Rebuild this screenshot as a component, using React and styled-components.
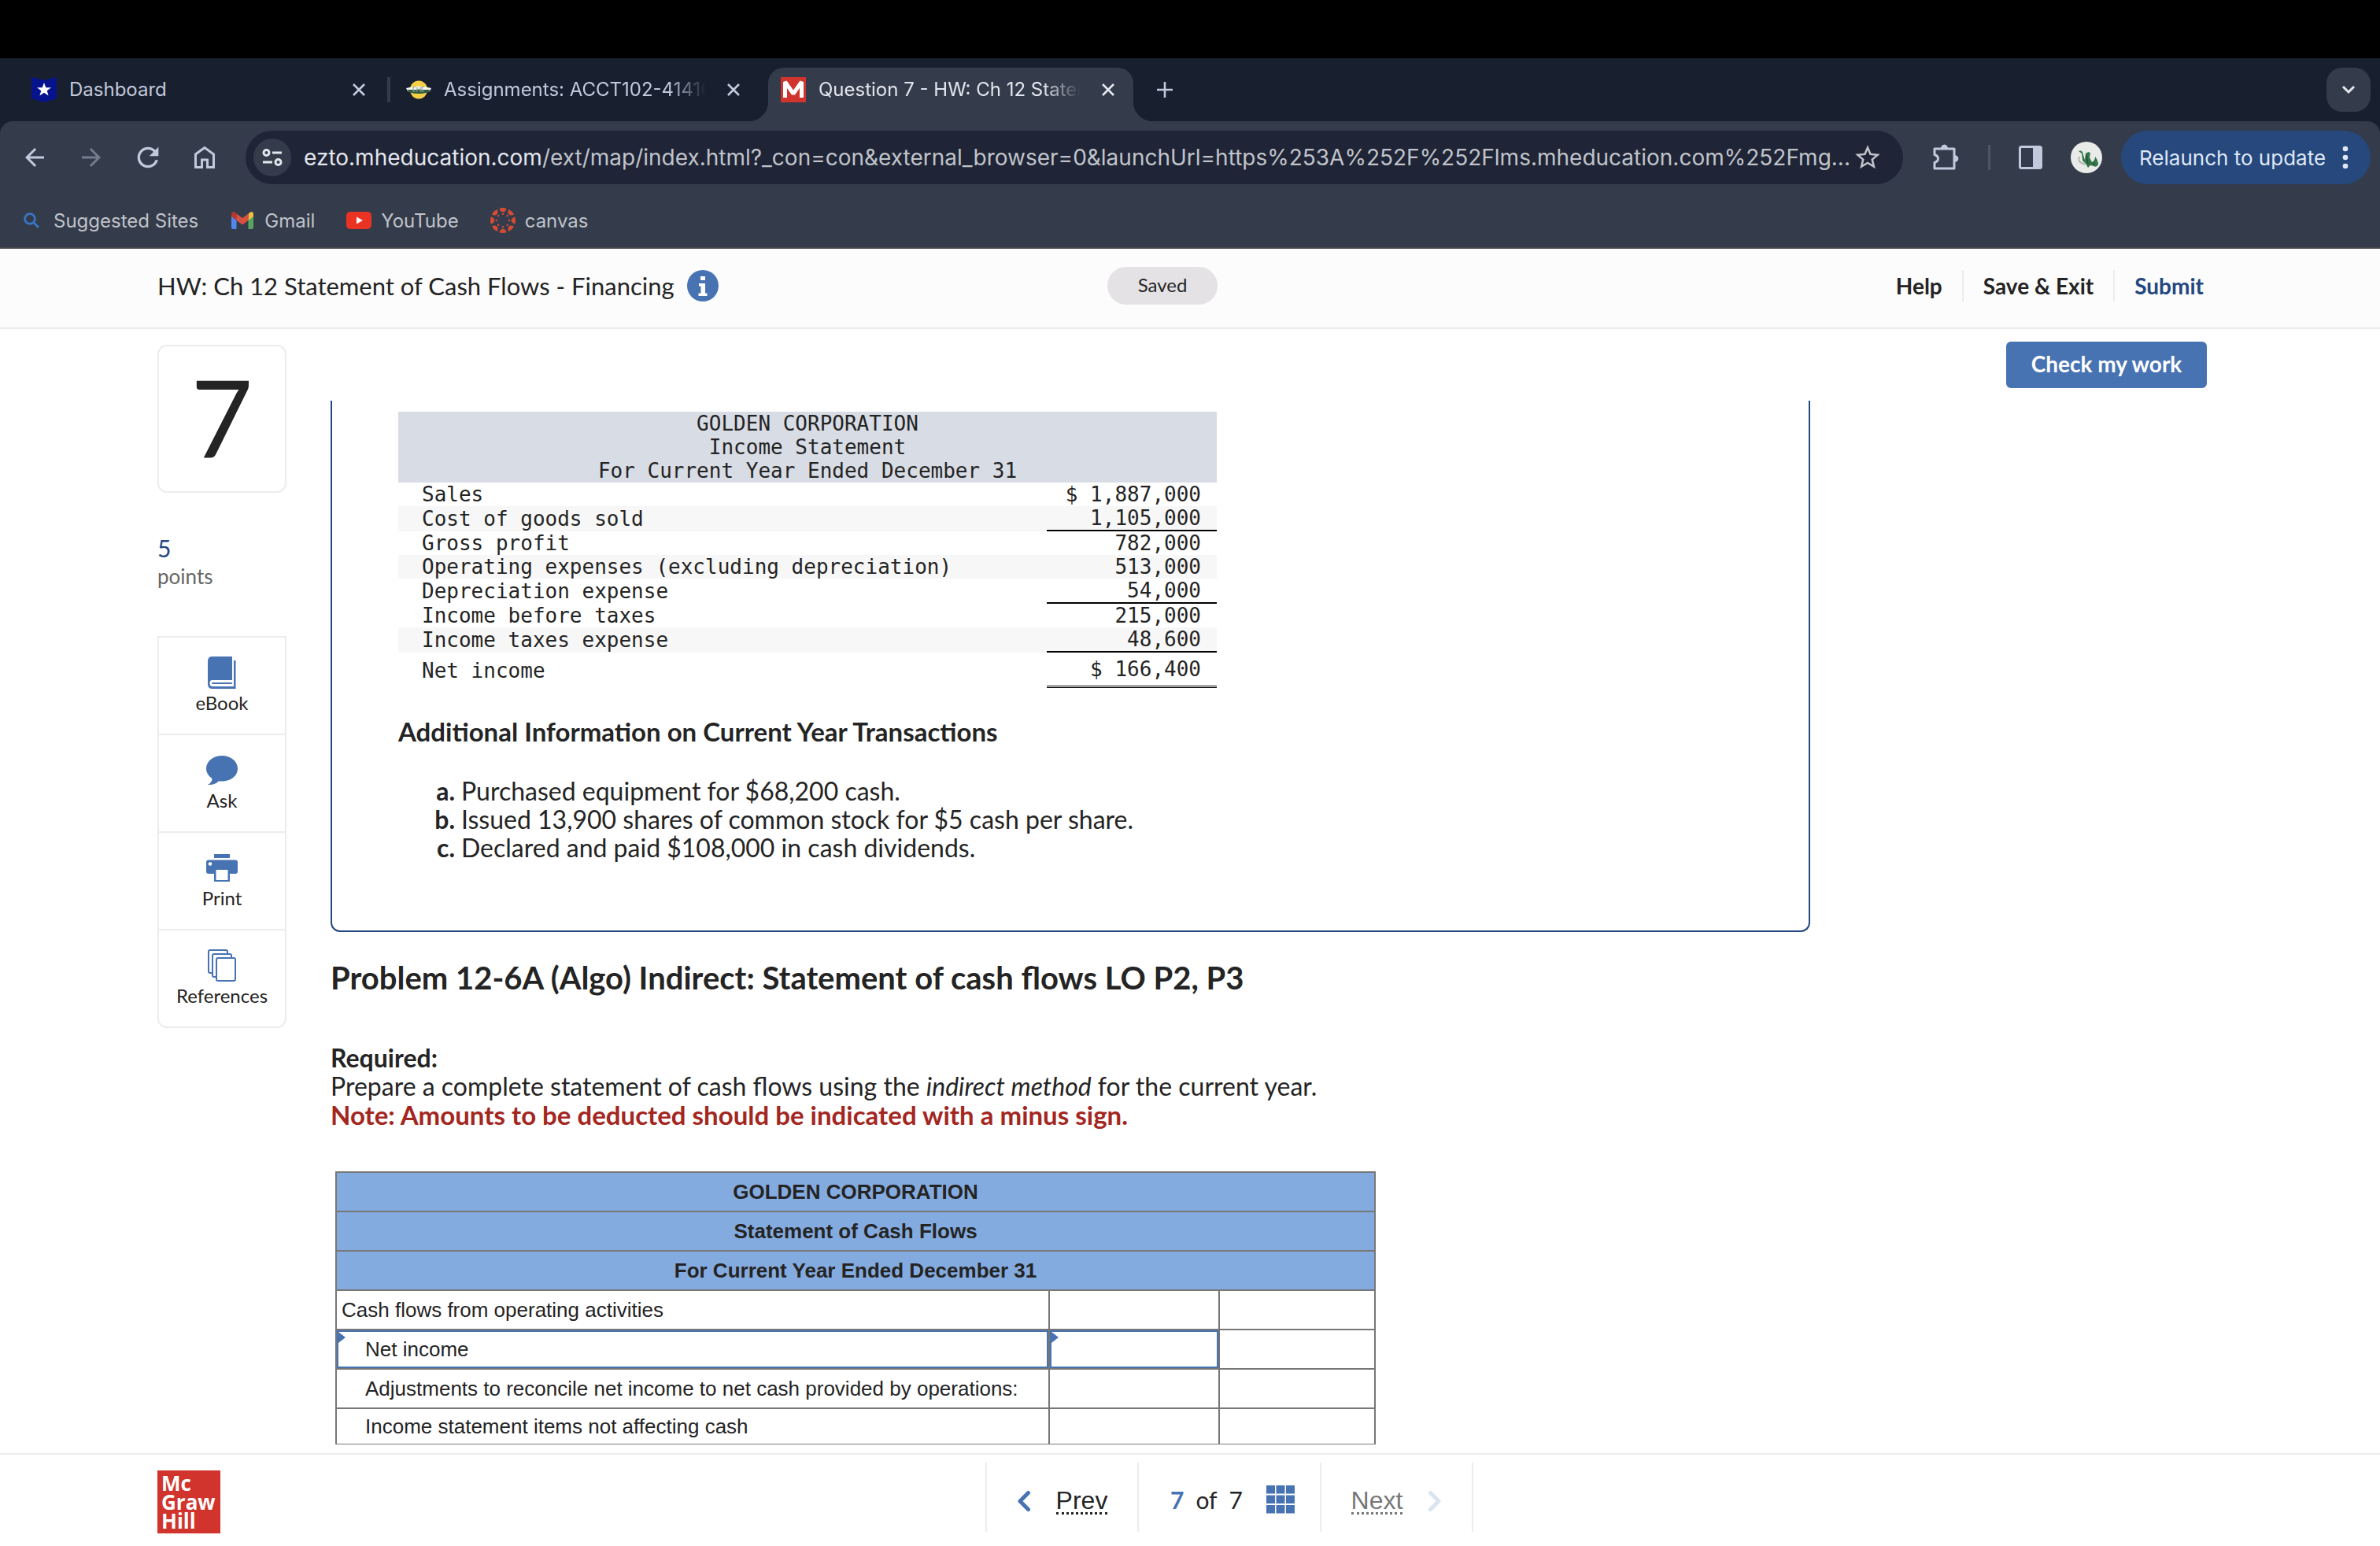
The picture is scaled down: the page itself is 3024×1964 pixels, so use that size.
import React from 'react'
import styled, { createGlobalStyle } from 'styled-components'
import { MdArrowBack, MdArrowForward, MdRefresh, MdStarBorder } from 'react-icons/md'

const PALETTE = {
  STRIP: '#18202f',
  TOOLBAR: '#343c4b',
  OMNIBOX: '#1f2536',
  CHROME_TEXT: '#c3c9dc',
  BLUE: '#4873b3',
  NAVY: '#23477f',
  TEXT: '#242424',
  LINE: '#ececec',
  RED: '#d0342c',
}

const FONTS = {
  CHROME: "'Inter', sans-serif",
  PAGE: "'Lato', sans-serif",
  ARIAL: "'Liberation Sans', Arial, sans-serif",
  MONO: "'DejaVu Sans Mono', monospace",
}

const TABS = [
  { id: 'dashboard', title: 'Dashboard', divided: true },
  { id: 'assignments', title: 'Assignments: ACCT102-41416' },
  { id: 'question', title: 'Question 7 - HW: Ch 12 Statement', active: true },
]

const BOOKMARKS = [
  { id: 'search', title: 'Suggested Sites' },
  { id: 'gmail', title: 'Gmail' },
  { id: 'youtube', title: 'YouTube' },
  { id: 'canvas', title: 'canvas' },
]

const TOOLS = ['eBook', 'Ask', 'Print', 'References']

const INCOME_ROWS = [
  { label: 'Sales', value: '$ 1,887,000' },
  { label: 'Cost of goods sold', value: '1,105,000', line: true, shaded: true },
  { label: 'Gross profit', value: '782,000' },
  { label: 'Operating expenses (excluding depreciation)', value: '513,000', shaded: true },
  { label: 'Depreciation expense', value: '54,000', line: true },
  { label: 'Income before taxes', value: '215,000' },
  { label: 'Income taxes expense', value: '48,600', line: true, shaded: true },
]

const TRANSACTIONS = [
  { mark: 'a.', text: 'Purchased equipment for $68,200 cash.' },
  { mark: 'b.', text: 'Issued 13,900 shares of common stock for $5 cash per share.' },
  { mark: 'c.', text: 'Declared and paid $108,000 in cash dividends.' },
]

const Favicon = ({ id }) => {
  if (id === 'dashboard') {
    return (
      <svg width="32" height="32" viewBox="0 0 32 32">
        <path d="M0 0 L16 4 L32 0 V27 L16 32 L0 27Z" fill="#07138c" />
        <path d="M16 7 L18.3 13.2 H25 L19.7 17.2 L21.6 23.6 L16 19.8 L10.4 23.6 L12.3 17.2 L7 13.2 H13.7Z" fill="#fff" />
      </svg>
    )
  }
  if (id === 'assignments') {
    return (
      <svg width="32" height="32" viewBox="0 0 32 32">
        <ellipse cx="16" cy="16" rx="11" ry="11.5" fill="#f7cf46" />
        <path d="M0 14 Q16 9 32 14 L30 18 Q16 22 2 18Z" fill="#f4f6f2" />
        <path d="M1 16 H31 L27 19.500 Q16 22.500 5 19.500Z" fill="#2f5a41" />
        <path d="M12 12.500 H9 V18 H12 M14 18.500 V12.500 M18 12.500 V18.500 M14 15.500 H18 M23 12.500 H20 V18 H23" fill="none" stroke="#8fa597" strokeWidth="1.200" />
      </svg>
    )
  }
  return (
    <svg width="32" height="32" viewBox="0 0 32 32">
      <rect width="32" height="32" fill={PALETTE.RED} />
      <path d="M5.500 26 V6 L16 21 L26.500 6 V26" fill="none" stroke="#fff" strokeWidth="5" strokeLinejoin="bevel" />
    </svg>
  )
}

const petals = [0, 45, 90, 135, 180, 225, 270, 315]

const BookmarkIcon = ({ id }) => {
  if (id === 'search') {
    return (
      <svg width="20" height="20" viewBox="0 0 20 20" fill="none" stroke="#3a74c4" strokeWidth="2.800">
        <circle cx="8" cy="8" r="6.400" />
        <path d="M12.500 12.500 L19 19" />
      </svg>
    )
  }
  if (id === 'gmail') {
    return (
      <svg width="28" height="22" viewBox="0 0 28 22">
        <path d="M0 3 V20 Q0 22 2 22 H6.500 V8Z" fill="#5087ec" />
        <path d="M28 3 V20 Q28 22 26 22 H21.500 V8Z" fill="#58a65c" />
        <path d="M0 3 Q0 0 3 0 L6.500 2.500 V11 L0 6Z" fill="#b8362b" />
        <path d="M28 3 Q28 0 25 0 L21.500 2.500 V11 L28 6Z" fill="#f1bd42" />
        <path d="M6.500 2.500 L14 8 L21.500 2.500 V11 L14 16.500 L6.500 11Z" fill="#d95140" />
      </svg>
    )
  }
  if (id === 'youtube') {
    return (
      <svg width="32" height="24" viewBox="0 0 32 24">
        <rect y="1" width="32" height="22" rx="5" fill="#ea3323" />
        <path d="M13 7.500 L21 12 L13 16.500Z" fill="#fff" />
      </svg>
    )
  }
  return (
    <svg width="32" height="32" viewBox="0 0 32 32" fill="#d74b35">
      {petals.map(angle => (
        <g key={angle} transform={`rotate(${angle} 16 16)`}>
          <path d="M11.500 0.700 Q16 -0.700 20.500 0.700 Q19.500 5.200 16 5.200 Q12.500 5.200 11.500 0.700Z" />
          <circle cx="16" cy="7.800" r="1.300" />
        </g>
      ))}
    </svg>
  )
}

const ToolIcon = ({ name }) => {
  if (name === 'eBook') {
    return (
      <svg width="40" height="42" viewBox="0 0 40 42" fill={PALETTE.BLUE}>
        <path d="M7 0 H33 V30 H7 Q4.500 30.500 4.500 34 Q4.500 38 8 38 H35 V5 H37.500 V41 H8 Q2 41 2 35 V6 Q2 0 7 0Z" />
        <rect x="7" y="33" width="26" height="2" rx="1" />
      </svg>
    )
  }
  if (name === 'Ask') {
    return (
      <svg width="40" height="42" viewBox="0 0 40 42" fill={PALETTE.BLUE}>
        <path d="M20 2 C31 2 40 9 40 18.500 C40 28 31 34.500 20 34.500 C18.500 34.500 17 34.400 16 34.200 C13 37.500 8 39.500 2 39 C5.500 37 7.500 34.500 7.500 31 C3 28 0 23.500 0 18.500 C0 9 9 2 20 2Z" />
      </svg>
    )
  }
  if (name === 'Print') {
    return (
      <svg width="40" height="42" viewBox="0 0 40 42" fill={PALETTE.BLUE}>
        <rect x="10" y="3" width="20" height="5" />
        <path fillRule="evenodd" d="M3 10.500 H37 Q40 10.500 40 13.500 V25 Q40 28 37 28 H30 V38 H10 V28 H3 Q0 28 0 25 V13.500 Q0 10.500 3 10.500Z M12.500 23 V36 H27.500 V23Z" />
        <circle cx="5" cy="15.500" r="2.300" fill="#fff" />
      </svg>
    )
  }
  return (
    <svg width="40" height="42" viewBox="0 0 40 42" fill="#fff" stroke={PALETTE.BLUE} strokeWidth="2">
      <rect x="3" y="1" width="24" height="29" rx="2" />
      <rect x="8" y="6" width="24" height="29" rx="2" />
      <rect x="13" y="11" width="24" height="29" rx="2" />
    </svg>
  )
}

const CloseIcon = () => (
  <svg width="16" height="16" viewBox="0 0 16 16" stroke="currentColor" strokeWidth="2.600">
    <path d="M1 1 L15 15 M15 1 L1 15" />
  </svg>
)

const App = () => {
  return (
    <Page>
      <GlobalStyle />
      <MenuBar />
      <Chrome>
        <TabStrip>
          {TABS.map(tab => (
            <Tab key={tab.id} $active={tab.active} $divided={tab.divided}>
              <Favicon id={tab.id} />
              <TabTitle $fade={!tab.divided}>{tab.title}</TabTitle>
              <PlainButton aria-label="Close tab"><CloseIcon /></PlainButton>
            </Tab>
          ))}
          <NewTab aria-label="New tab">
            <svg width="20" height="20" viewBox="0 0 20 20" stroke="currentColor" strokeWidth="2.600"><path d="M10 0 V20 M0 10 H20" /></svg>
          </NewTab>
          <TabSearch aria-label="Search tabs">
            <svg width="18" height="12" viewBox="0 0 18 12" fill="none" stroke="#e3e6ee" strokeWidth="3"><path d="M2 2 L9 9 L16 2" /></svg>
          </TabSearch>
        </TabStrip>

        <Toolbar>
          <NavButtons>
            <PlainButton aria-label="Back"><MdArrowBack size={36} /></PlainButton>
            <PlainButton aria-label="Forward" $dim><MdArrowForward size={36} /></PlainButton>
            <PlainButton aria-label="Reload"><MdRefresh size={40} /></PlainButton>
            <PlainButton aria-label="Home">
              <svg width="28" height="30" viewBox="0 0 28 30" fill="none" stroke="currentColor" strokeWidth="3">
                <path d="M2.500 11 L14 2.500 L25.500 11 V27.500 H17.500 V18 H10.500 V27.500 H2.500Z" />
              </svg>
            </PlainButton>
          </NavButtons>
          <Omnibox>
            <SiteInfo aria-label="Site information">
              <svg width="26" height="24" viewBox="0 0 26 24" fill="none" stroke="#e3e6ee" strokeWidth="3">
                <circle cx="5.500" cy="6" r="3.500" />
                <path d="M13 6 H25 M1 18 H13" />
                <circle cx="20.500" cy="18" r="3.500" />
              </svg>
            </SiteInfo>
            <Url><b>ezto.mheducation.com</b>/ext/map/index.html?_con=con&amp;external_browser=0&amp;launchUrl=https%253A%252F%252Flms.mheducation.com%252Fmg...</Url>
            <PlainButton aria-label="Bookmark this page"><MdStarBorder size={38} /></PlainButton>
          </Omnibox>
          <Extensions>
            <PlainButton aria-label="Extensions">
              <svg width="36" height="36" viewBox="0 0 36 36" fill="none" stroke="currentColor" strokeWidth="3" strokeLinejoin="round">
                <path d="M4 7 H29 V32 H4 V24.500 Q8.500 23 8.500 19.500 Q8.500 16 4 14.500Z" />
                <path d="M12.500 6 Q13 2 16.500 2 Q20 2 20.500 6Z M30 15.500 Q34 16 34 19.500 Q34 23 30 23.500Z" fill="currentColor" strokeWidth="1" />
              </svg>
            </PlainButton>
            <Divider />
            <PlainButton aria-label="Side panel">
              <svg width="30" height="30" viewBox="0 0 30 30"><rect x="1.500" y="1.500" width="27" height="27" rx="2" fill="none" stroke="currentColor" strokeWidth="3" /><rect x="18" y="1" width="11" height="28" fill="currentColor" /></svg>
            </PlainButton>
            <PlainButton aria-label="Profile">
              <svg width="40" height="40" viewBox="0 0 40 40">
                <circle cx="20" cy="20" r="20" fill="#e9ebe9" />
                <path d="M10 12 Q15 10 16 17 L18 23 L19 15 Q22 12 25 14 L24 20 L27 26 Q31 24 31 19 Q35 24 35 29 Q33 33 29 31 L25 30 L22 33 L19 28 L15 24 L14 15Z" fill="#36764b" />
                <path d="M11 19 Q9 25 14 27 L18 29" fill="none" stroke="#adb8ae" strokeWidth="2" />
                <path d="M20 17 L22 28 M28 27 L31 29" stroke="#1f5032" strokeWidth="1.500" />
              </svg>
            </PlainButton>
          </Extensions>
          <Relaunch>
            Relaunch to update
            <svg width="8" height="30" viewBox="0 0 8 30" fill="#dfe7f7"><circle cx="4" cy="4" r="3.300" /><circle cx="4" cy="15" r="3.300" /><circle cx="4" cy="26" r="3.300" /></svg>
          </Relaunch>
        </Toolbar>

        <BookmarkBar>
          {BOOKMARKS.map(item => (
            <Bookmark key={item.id} href="#">
              <IconSlot><BookmarkIcon id={item.id} /></IconSlot>
              {item.title}
            </Bookmark>
          ))}
        </BookmarkBar>
      </Chrome>

      <Header>
        <Title>
          HW: Ch 12 Statement of Cash Flows - Financing
          <PlainButton aria-label="Assignment information">
            <svg width="40" height="40" viewBox="0 0 40 40">
              <circle cx="20" cy="20" r="20" fill={PALETTE.BLUE} />
              <path d="M17 8 H23 V13 H17Z M15 17 H23 V29.500 H25.500 V33 H14.500 V29.500 H17.500 V20.500 H15Z" fill="#fff" />
            </svg>
          </PlainButton>
        </Title>
        <Saved>Saved</Saved>
        <HeaderLinks>
          <HeaderLink href="#">Help</HeaderLink>
          <HeaderLink href="#">Save &amp; Exit</HeaderLink>
          <HeaderLink href="#" $color={PALETTE.NAVY}>Submit</HeaderLink>
        </HeaderLinks>
      </Header>

      <Main>
        <Sidebar>
          <QuestionNumber>7</QuestionNumber>
          <Points><span>5</span>points</Points>
          <ToolList>
            {TOOLS.map(name => (
              <ToolButton key={name}><ToolIcon name={name} />{name}</ToolButton>
            ))}
          </ToolList>
        </Sidebar>

        <Content>
          <Panel>
            <IncomeTable>
              <thead>
                <tr><th colSpan="2">GOLDEN CORPORATION</th></tr>
                <tr><th colSpan="2">Income Statement</th></tr>
                <tr><th colSpan="2">For Current Year Ended December 31</th></tr>
              </thead>
              <tbody>
                {INCOME_ROWS.map(row => (
                  <IncomeRow key={row.label} $shaded={row.shaded}>
                    <td>{row.label}</td>
                    <Amount $line={row.line}>{row.value}</Amount>
                  </IncomeRow>
                ))}
                <NetRow>
                  <td>Net income</td>
                  <Amount $total>$ 166,400</Amount>
                </NetRow>
              </tbody>
            </IncomeTable>
            <PanelHeading>Additional Information on Current Year Transactions</PanelHeading>
            <Transactions>
              {TRANSACTIONS.map(item => (
                <li key={item.mark}><b>{item.mark}</b>{item.text}</li>
              ))}
            </Transactions>
          </Panel>

          <ProblemHeading>Problem 12-6A (Algo) Indirect: Statement of cash flows LO P2, P3</ProblemHeading>
          <Instructions>
            <b>Required:</b><br />
            Prepare a complete statement of cash flows using the <i>indirect method</i> for the current year.<br />
            <Note>Note: Amounts to be deducted should be indicated with a minus sign.</Note>
          </Instructions>

          <CashTable>
            <colgroup>
              <col width="906" />
              <col width="216" />
              <col width="198" />
            </colgroup>
            <thead>
              <tr><th colSpan="3">GOLDEN CORPORATION</th></tr>
              <tr><th colSpan="3">Statement of Cash Flows</th></tr>
              <tr><th colSpan="3">For Current Year Ended December 31</th></tr>
            </thead>
            <tbody>
              <tr><CashLabel>Cash flows from operating activities</CashLabel><td /><td /></tr>
              <tr>
                <EntryCell><EntryInput aria-label="Item" defaultValue="Net income" /></EntryCell>
                <EntryCell><EntryInput aria-label="Net income amount" /></EntryCell>
                <td />
              </tr>
              <tr><CashLabel $indent>Adjustments to reconcile net income to net cash provided by operations:</CashLabel><td /><td /></tr>
              <LastRow><CashLabel $indent>Income statement items not affecting cash</CashLabel><td /><td /></LastRow>
            </tbody>
          </CashTable>
        </Content>

        <Actions>
          <CheckButton>Check my work</CheckButton>
        </Actions>
      </Main>

      <Footer>
        <Logo>Mc<br />Graw<br />Hill</Logo>
        <Pager>
          <PagerButton>
            <svg width="18" height="28" viewBox="0 0 18 28" fill="none" stroke={PALETTE.BLUE} strokeWidth="5" strokeLinecap="round" strokeLinejoin="round"><path d="M14.500 3.500 L4 14 L14.500 24.500" /></svg>
            <span>Prev</span>
          </PagerButton>
          <PagerCount>
            <b>7</b><span>of</span><span>7</span>
            <PlainButton aria-label="Question list">
              <svg width="36" height="36" viewBox="0 0 36 36" fill={PALETTE.BLUE}>
                {[0, 12.5, 25].map(y => [0, 12.5, 25].map(x => <rect key={`${x}-${y}`} x={x} y={y} width="11" height="10.500" />))}
              </svg>
            </PlainButton>
          </PagerCount>
          <PagerButton $muted>
            <span>Next</span>
            <svg width="18" height="28" viewBox="0 0 18 28" fill="none" stroke="#dbe4f1" strokeWidth="5" strokeLinecap="round" strokeLinejoin="round"><path d="M3.500 3.500 L14 14 L3.500 24.500" /></svg>
          </PagerButton>
        </Pager>
      </Footer>
    </Page>
  )
}

const GlobalStyle = createGlobalStyle`
  * {
    box-sizing: border-box;
  }

  body {
    margin: 0;
    background: #fff;
    color: ${PALETTE.TEXT};
    font-family: ${FONTS.PAGE};
  }

  svg {
    display: block;
    flex: none;
  }

  button {
    font-family: inherit;
  }
`

const Page = styled.div`
  height: 100vh;
  display: flex;
  flex-direction: column;
  overflow: hidden;
`

const MenuBar = styled.div`
  height: 74px;
  flex: none;
  background: #000;
`

const Chrome = styled.div`
  flex: none;
  background: ${PALETTE.STRIP};
  color: ${PALETTE.CHROME_TEXT};
  font-family: ${FONTS.CHROME};
`

const PlainButton = styled.button`
  display: flex;
  align-items: center;
  justify-content: center;
  flex: none;
  padding: 0;
  border: none;
  background: none;
  color: inherit;
  cursor: pointer;
  opacity: ${props => props.$dim ? 0.45 : 1};
`

const TabStrip = styled.div`
  display: flex;
  align-items: flex-start;
  height: 80px;
  padding: 12px 12px 0 24px;
`

const Tab = styled.div`
  position: relative;
  display: flex;
  align-items: center;
  gap: 16px;
  width: 464px;
  height: 68px;
  padding: 0 24px 12px 16px;
  border-radius: 20px 20px 0 0;
  background: ${props => props.$active ? PALETTE.TOOLBAR : 'none'};
  color: ${props => props.$active ? '#e3e6ee' : 'inherit'};

  & + & {
    margin-left: 12px;
  }

  /* flared feet of the selected tab */
  &::before,
  &::after {
    content: '';
    display: ${props => props.$active ? 'block' : 'none'};
    position: absolute;
    bottom: 0;
    width: 24px;
    height: 24px;
  }

  &::before {
    right: 100%;
    background: radial-gradient(circle at 0 0, transparent 24px, ${PALETTE.TOOLBAR} 24px);
  }

  &::after {
    left: 100%;
    background: radial-gradient(circle at 100% 0, transparent 24px, ${PALETTE.TOOLBAR} 24px);
  }

  ${props => props.$divided && `
    &::after {
      display: block;
      left: 468px;
      bottom: 24px;
      width: 4px;
      height: 32px;
      background: ${PALETTE.TOOLBAR};
    }
  `}
`

const TabTitle = styled.span`
  flex: 1;
  min-width: 0;
  margin-right: 8px;
  overflow: hidden;
  white-space: nowrap;
  font-size: 24px;
  line-height: 32px;
  ${props => props.$fade && 'mask-image: linear-gradient(to right, #000 85%, transparent 99%);'}
`

const NewTab = styled(PlainButton)`
  width: 56px;
  height: 56px;
  margin-left: 12px;
`

const TabSearch = styled(PlainButton)`
  width: 56px;
  height: 56px;
  margin-left: auto;
  border-radius: 20px;
  background: ${PALETTE.TOOLBAR};
`

const Toolbar = styled.div`
  display: flex;
  align-items: center;
  height: 92px;
  padding: 0 12px 0 26px;
  border-radius: 16px 16px 0 0;
  background: ${PALETTE.TOOLBAR};
`

const NavButtons = styled.div`
  display: grid;
  grid-template-columns: repeat(4, 36px);
  justify-items: center;
  align-items: center;
  gap: 36px;
  margin-right: 34px;
`

const Omnibox = styled.div`
  display: flex;
  align-items: center;
  flex: 1;
  min-width: 0;
  height: 68px;
  padding: 0 26px 0 10px;
  border-radius: 34px;
  background: ${PALETTE.OMNIBOX};
  color: #c0c3ca;
`

const SiteInfo = styled(PlainButton)`
  width: 48px;
  height: 48px;
  border-radius: 24px;
  background: ${PALETTE.TOOLBAR};
`

const Url = styled.div`
  flex: 1;
  min-width: 0;
  margin-left: 16px;
  overflow: hidden;
  white-space: nowrap;
  font-size: 28px;
  line-height: 40px;

  b {
    font-weight: 400;
    color: #e3e6ee;
  }
`

const Extensions = styled.div`
  display: flex;
  align-items: center;
  gap: 36px;
  margin: 0 24px 0 36px;
`

const Divider = styled.div`
  width: 3px;
  height: 32px;
  background: #4d5666;
`

const Relaunch = styled.button`
  display: flex;
  align-items: center;
  justify-content: space-between;
  width: 317px;
  height: 68px;
  padding: 0 28px 0 23px;
  border: none;
  border-radius: 34px;
  background: #26487c;
  color: #dfe7f7;
  font-size: 26px;
  white-space: nowrap;
`

const BookmarkBar = styled.nav`
  display: flex;
  gap: 40px;
  height: 70px;
  padding: 0 24px;
  border-bottom: 2px solid #47474c;
  background: ${PALETTE.TOOLBAR};
`

const Bookmark = styled.a`
  display: flex;
  align-items: center;
  gap: 12px;
  height: 68px;
  color: #c0c3ca;
  font-size: 24px;
  text-decoration: none;
`

const IconSlot = styled.span`
  display: flex;
  justify-content: center;
  width: 32px;
`

const Header = styled.header`
  display: grid;
  grid-template-columns: minmax(0, 1207fr) 140px minmax(0, 1253fr);
  align-items: center;
  flex: none;
  height: 102px;
  padding: 0 224px 6px 200px;
  border-bottom: 2px solid ${PALETTE.LINE};
  background: #fcfcfc;
`

const Title = styled.div`
  display: flex;
  align-items: center;
  gap: 16px;
  font-size: 31px;
  line-height: 40px;
`

const Saved = styled.div`
  height: 48px;
  border-radius: 24px;
  background: #e4e2e5;
  font-size: 24px;
  line-height: 46px;
  text-align: center;
`

const HeaderLinks = styled.nav`
  display: flex;
  justify-content: flex-end;
`

const HeaderLink = styled.a`
  padding: 0 25px;
  color: ${props => props.$color || PALETTE.TEXT};
  font-size: 28px;
  font-weight: 700;
  line-height: 40px;
  text-decoration: none;

  & + & {
    border-left: 2px solid ${PALETTE.LINE};
  }

  &:last-child {
    padding-right: 0;
  }
`

const Main = styled.main`
  display: flex;
  flex: 1;
  min-height: 0;
  padding: 0 220px 11px 200px;
`

const Sidebar = styled.aside`
  width: 164px;
  flex: none;
  padding-top: 20px;
`

const QuestionNumber = styled.div`
  height: 188px;
  border: 2px solid ${PALETTE.LINE};
  border-radius: 12px;
  font-size: 136px;
  line-height: 178px;
  text-align: center;
`

const Points = styled.div`
  margin: 52px 0 58px;
  color: #666;
  font-size: 26px;
  line-height: 36px;

  span {
    display: block;
    color: ${PALETTE.NAVY};
    font-size: 30px;
  }
`

const ToolList = styled.div`
  border: 2px solid ${PALETTE.LINE};
  border-radius: 0 0 12px 12px;
`

const ToolButton = styled.button`
  display: flex;
  flex-direction: column;
  align-items: center;
  gap: 2px;
  width: 100%;
  height: 122px;
  padding: 24px 0 0;
  border: none;
  background: none;
  color: ${PALETTE.TEXT};
  font-size: 24px;
  line-height: 30px;

  & + & {
    height: 124px;
    border-top: 2px solid ${PALETTE.LINE};
  }
`

const Content = styled.section`
  flex: 1;
  min-width: 0;
  margin: 91px 0 0 56px;
  overflow: hidden;
`

const Panel = styled.div`
  padding: 14px 84px 87px;
  border: 2px solid ${PALETTE.NAVY};
  border-top: none;
  border-radius: 0 0 12px 12px;
`

const IncomeTable = styled.table`
  width: 1040px;
  border-spacing: 0;
  font-family: ${FONTS.MONO};
  font-size: 26px;
  line-height: 30px;

  th {
    padding: 0;
    background: #d8dce5;
    font-weight: 400;
  }

  td {
    padding: 0 0 0 30px;
  }
`

const IncomeRow = styled.tr`
  background: ${props => props.$shaded ? '#f7f7f7' : 'none'};
`

const NetRow = styled.tr`
  height: 45px;
`

const Amount = styled.td`
  && {
    width: 216px;
    padding: 0 20px 0 0;
    text-align: right;
    border-bottom: ${props => props.$total ? '3px double #000' : props.$line ? '2px solid #000' : 'none'};
  }
`

const PanelHeading = styled.h3`
  margin: 37px 0 40px;
  font-size: 33px;
  line-height: 36px;
`

const Transactions = styled.ol`
  margin: 0;
  padding: 0 0 0 44px;
  list-style: none;
  font-size: 32px;
  line-height: 36px;

  li {
    display: flex;
    gap: 8px;
  }

  b {
    width: 28px;
    text-align: right;
  }
`

const ProblemHeading = styled.h2`
  margin: 34px 0 60px;
  font-size: 40px;
  line-height: 48px;
`

const Instructions = styled.p`
  margin: 0 0 53px;
  font-size: 32px;
  line-height: 36px;
`

const Note = styled.strong`
  color: #a3261f;
  font-size: 33px;
`

const CashTable = styled.table`
  width: 1320px;
  margin-left: 6px;
  table-layout: fixed;
  border-collapse: collapse;
  font-family: ${FONTS.ARIAL};
  font-size: 26px;
  line-height: 30px;

  tr {
    height: 50px;
  }

  th,
  td {
    padding: 0;
    border: 2px solid #777;
  }

  th {
    background: #84abdf;
  }
`

const LastRow = styled.tr`
  && {
    height: 46px;
  }
`

const CashLabel = styled.td`
  && {
    padding-left: ${props => props.$indent ? 36 : 6}px;
  }
`

const EntryCell = styled.td`
  position: relative;

  &::after {
    content: '';
    position: absolute;
    top: 2px;
    left: 2px;
    border: 7px solid transparent;
    border-left: 9px solid ${PALETTE.BLUE};
    border-right: none;
  }
`

const EntryInput = styled.input`
  display: block;
  width: 100%;
  height: 48px;
  padding: 0 34px;
  border: 2px solid ${PALETTE.BLUE};
  background: #fff;
  color: ${PALETTE.TEXT};
  font-family: ${FONTS.ARIAL};
  font-size: 26px;
`

const Actions = styled.div`
  width: 504px;
  flex: none;
  padding-top: 16px;
`

const CheckButton = styled.button`
  display: block;
  width: 255px;
  height: 59px;
  margin-left: auto;
  padding: 0 0 4px;
  border: none;
  border-radius: 6px;
  background: ${PALETTE.BLUE};
  color: #fff;
  font-size: 28px;
  font-weight: 700;
`

const Footer = styled.footer`
  display: grid;
  grid-template-columns: 1fr auto 1fr;
  align-items: start;
  flex: none;
  height: 118px;
  padding: 10px 100px 0 200px;
  border-top: 2px solid ${PALETTE.LINE};
`

const Logo = styled.div`
  width: 80px;
  height: 80px;
  margin-top: 10px;
  padding: 4px 5px 0;
  background: ${PALETTE.RED};
  color: #fff;
  font-family: 'Open Sans', sans-serif;
  font-size: 26px;
  font-weight: 700;
  line-height: 24px;
`

const Pager = styled.nav`
  display: flex;
  height: 88px;
  border-left: 2px solid ${PALETTE.LINE};
  font-family: ${FONTS.ARIAL};
`

const PagerButton = styled.button`
  display: flex;
  align-items: center;
  justify-content: center;
  gap: 32px;
  width: 193px;
  padding: 10px 0 0;
  border: none;
  border-right: 2px solid ${PALETTE.LINE};
  background: none;
  color: ${props => props.$muted ? '#777' : PALETTE.TEXT};
  font-size: 32px;

  span {
    line-height: 30px;
    border-bottom: 3px dotted currentColor;
  }
`

const PagerCount = styled.div`
  display: flex;
  align-items: center;
  gap: 15px;
  width: 232px;
  padding: 6px 0 0 40px;
  border-right: 2px solid ${PALETTE.LINE};
  font-family: ${FONTS.PAGE};
  font-size: 30px;

  b {
    color: ${PALETTE.BLUE};
  }

  button {
    margin-left: 15px;
  }
`

export default App
